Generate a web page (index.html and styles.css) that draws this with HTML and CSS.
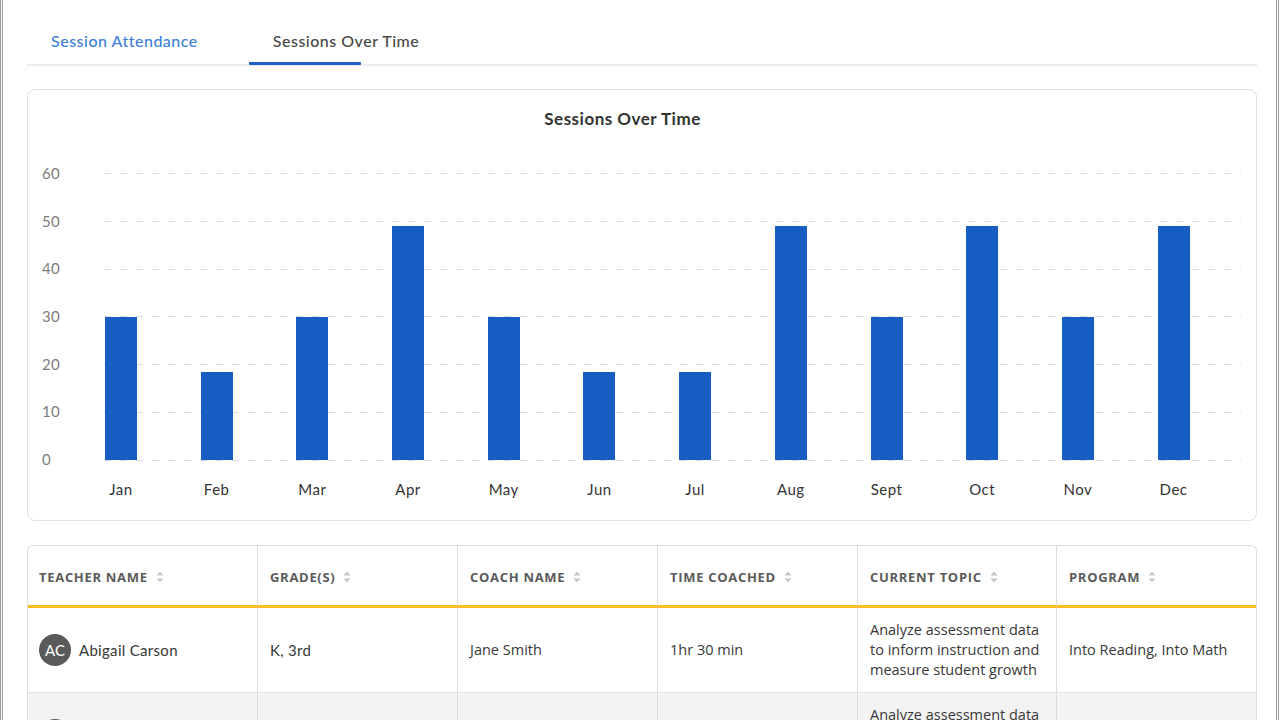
FILE: index.html
```html
<!DOCTYPE html>
<html lang="en">
<head>
<meta charset="utf-8">
<title>Sessions Over Time</title>
<link rel="stylesheet" href="styles.css">
</head>
<body>
<div class="frame">
  <nav class="tabs">
    <div class="tab">Session Attendance</div>
    <div class="tab active">Sessions Over Time</div>
  </nav>

  <section class="chart-card">
    <h2 class="chart-title">Sessions Over Time</h2>
    <div class="chart-body">
      <div class="y-axis">
        <span>60</span><span>50</span><span>40</span><span>30</span><span>20</span><span>10</span><span>0</span>
      </div>
      <div class="plot">
        <div class="gridlines">
          <i></i><i></i><i></i><i></i><i></i><i></i><i></i>
        </div>
        <div class="bars">
          <div class="bar" style="height:143px"></div>
          <div class="bar" style="height:88px"></div>
          <div class="bar" style="height:143px"></div>
          <div class="bar" style="height:234px"></div>
          <div class="bar" style="height:143px"></div>
          <div class="bar" style="height:88px"></div>
          <div class="bar" style="height:88px"></div>
          <div class="bar" style="height:234px"></div>
          <div class="bar" style="height:143px"></div>
          <div class="bar" style="height:234px"></div>
          <div class="bar" style="height:143px"></div>
          <div class="bar" style="height:234px"></div>
        </div>
      </div>
      <div class="months">
        <span>Jan</span><span>Feb</span><span>Mar</span><span>Apr</span><span>May</span><span>Jun</span><span>Jul</span><span>Aug</span><span>Sept</span><span>Oct</span><span>Nov</span><span>Dec</span>
      </div>
    </div>
  </section>

  <section class="table-card">
    <div class="grid">
      <div class="th">Teacher Name <svg class="sort" viewBox="0 0 8 12"><path d="M4 0.5 L7.5 4.5 H0.5 Z M0.5 7.5 H7.5 L4 11.5 Z"/></svg></div>
      <div class="th">Grade(s) <svg class="sort" viewBox="0 0 8 12"><path d="M4 0.5 L7.5 4.5 H0.5 Z M0.5 7.5 H7.5 L4 11.5 Z"/></svg></div>
      <div class="th">Coach Name <svg class="sort" viewBox="0 0 8 12"><path d="M4 0.5 L7.5 4.5 H0.5 Z M0.5 7.5 H7.5 L4 11.5 Z"/></svg></div>
      <div class="th">Time Coached <svg class="sort" viewBox="0 0 8 12"><path d="M4 0.5 L7.5 4.5 H0.5 Z M0.5 7.5 H7.5 L4 11.5 Z"/></svg></div>
      <div class="th">Current Topic <svg class="sort" viewBox="0 0 8 12"><path d="M4 0.5 L7.5 4.5 H0.5 Z M0.5 7.5 H7.5 L4 11.5 Z"/></svg></div>
      <div class="th">Program <svg class="sort" viewBox="0 0 8 12"><path d="M4 0.5 L7.5 4.5 H0.5 Z M0.5 7.5 H7.5 L4 11.5 Z"/></svg></div>

      <div class="td name"><span class="avatar">AC</span>Abigail Carson</div>
      <div class="td geo">K, 3rd</div>
      <div class="td">Jane Smith</div>
      <div class="td">1hr 30 min</div>
      <div class="td">Analyze assessment data to inform instruction and measure student growth</div>
      <div class="td">Into Reading, Into Math</div>

      <div class="td name alt"><span class="avatar">BM</span>Brandon Miller</div>
      <div class="td geo alt">1st, 2nd</div>
      <div class="td alt">Jane Smith</div>
      <div class="td alt">2hr 15 min</div>
      <div class="td alt">Analyze assessment data to inform instruction and measure student growth</div>
      <div class="td alt">Into Reading</div>
    </div>
  </section>
</div>
</body>
</html>
```

FILE: styles.css
```css
* { box-sizing: border-box; }

html, body {
  margin: 0;
  padding: 0;
  background: #ffffff;
  overflow: hidden;
}

body {
  font-family: "Lato", "Open Sans", sans-serif;
  color: #333;
}

.frame {
  margin-right: 1px;
  min-height: 720px;
  border-left: 3px double #9a9a9a;
  border-right: 3px double #9a9a9a;
  padding: 0 19px 0 24px;
}

/* Tabs */
.tabs {
  display: flex;
  gap: 27px;
  border-bottom: 2px solid #e9ebec;
  padding-top: 31px;
}

.tab {
  position: relative;
  padding: 0 24px 13px;
  font-size: 16px;
  letter-spacing: 0.5px;
  line-height: 20px;
  color: #3d7fd9;
  font-weight: 500;
}

.tab.active {
  color: #474747;
}

.tab.active::after {
  content: "";
  position: absolute;
  left: 0;
  bottom: -1px;
  width: 112px;
  height: 3px;
  background: #1d5fc6;
  border-radius: 1px;
}

/* Chart card */
.chart-card {
  margin-top: 23px;
  border: 1px solid #dfe1e2;
  border-radius: 8px;
  padding: 19px 15px 21px 14px;
}

.chart-title {
  margin: 0 0 34px;
  padding-right: 38px;
  text-align: center;
  font-size: 17px;
  letter-spacing: 0.5px;
  line-height: 20px;
  font-weight: 700;
  color: #333;
}

.chart-body {
  display: grid;
  grid-template-columns: 62px 1fr;
  grid-template-rows: auto auto;
}

.y-axis {
  height: 306px;
  display: flex;
  flex-direction: column;
  justify-content: space-between;
}

.y-axis span {
  font-size: 15px;
  letter-spacing: 0.4px;
  line-height: 20px;
  color: #7c7c7c;
}

.plot {
  padding-top: 10px;
  display: grid;
}

.gridlines, .bars {
  grid-area: 1 / 1;
}

.gridlines {
  height: 288px;
  display: flex;
  flex-direction: column;
  justify-content: space-between;
}

.gridlines i {
  display: block;
  height: 1px;
  background: repeating-linear-gradient(to right, #d6dada 0 7px, transparent 7px 16px);
}

.bars {
  display: flex;
  align-items: flex-end;
  gap: 63.7px;
  padding-left: 1px;
  height: 287px;
}

.bar {
  width: 32px;
  background: #185dc4;
}

.months {
  grid-column: 2;
  display: flex;
  gap: 63.7px;
  padding-left: 1px;
  margin-top: 10px;
}

.months span {
  width: 32px;
  display: flex;
  justify-content: center;
  white-space: nowrap;
  font-size: 15px;
  letter-spacing: 0.5px;
  line-height: 20px;
  color: #333;
}

/* Table */
.table-card {
  margin-top: 24px;
  border: 1px solid #dcdcdc;
  border-bottom: none;
  border-radius: 6px 6px 0 0;
  overflow: hidden;
}

.grid {
  display: grid;
  grid-template-columns: 230px 200px 200px 200px 199px 1fr;
}

.th {
  height: 62px;
  padding: 3px 12px 0 11px;
  display: flex;
  align-items: center;
  gap: 8px;
  border-right: 1px solid #dcdcdc;
  border-bottom: 3px solid #fbbd1e;
  font-family: "Open Sans", sans-serif;
  font-weight: 700;
  font-size: 13px;
  letter-spacing: 0.7px;
  text-transform: uppercase;
  color: #5a5a5a;
}

.th:nth-child(n+2) { padding-left: 12px; }

.th:nth-child(6) { border-right: none; }

.sort {
  width: 8px;
  height: 12px;
  fill: #c4c6c8;
  flex: none;
}

.td {
  min-height: 84px;
  padding: 12px 12px;
  display: flex;
  align-items: center;
  border-right: 1px solid #dcdcdc;
  border-bottom: 1px solid #e4e4e4;
  font-family: "Open Sans", sans-serif;
  font-size: 14.5px;
  line-height: 20px;
  color: #383838;
}

.td:nth-child(6n) { border-right: none; }

.td.alt { background: #f3f3f3; }

.td.name {
  padding-left: 11px;
  gap: 8px;
  font-family: "Lato", sans-serif;
  font-size: 15px;
  letter-spacing: 0.3px;
}

.td.geo {
  font-family: "Lato", sans-serif;
  font-size: 15px;
  letter-spacing: 0.3px;
}

.avatar {
  width: 32px;
  height: 32px;
  border-radius: 50%;
  background: #5a5a5a;
  color: #fff;
  display: flex;
  align-items: center;
  justify-content: center;
  font-size: 15px;
  letter-spacing: 0;
  flex: none;
}
```
